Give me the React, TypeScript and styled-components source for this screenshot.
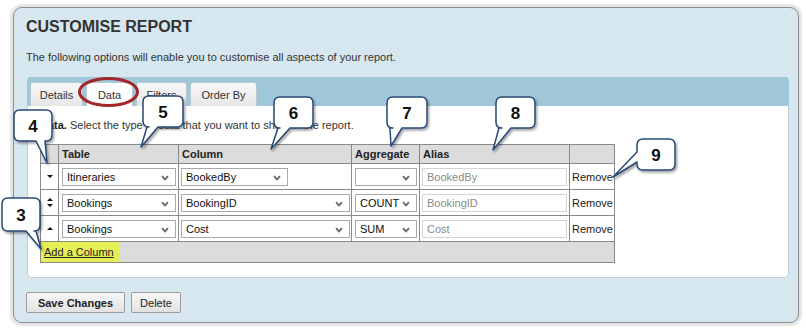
import React from "react";
import styled, { createGlobalStyle } from "styled-components";

const GlobalStyle = createGlobalStyle`
  html, body { margin: 0; padding: 0; background: #ffffff; }
  body { font-family: "Liberation Sans", Arial, sans-serif; font-size: 11px; color: #333; }
  * { box-sizing: border-box; }
`;

const Page = styled.div`
  position: relative;
  width: 806px;
  height: 329px;
  padding: 7px 0 0 13px;
  overflow: hidden;
`;

const Panel = styled.section`
  width: 786px;
  border: 1px solid #8e8e8e;
  border-radius: 9px;
  background: #d6e7ef;
  box-shadow: 0 0 2px 3px #e4e4e4;
  padding: 10px 8px 9px 12px;
`;

const Title = styled.h1`
  margin: 0;
  font-size: 16px;
  line-height: 18px;
  font-weight: bold;
  color: #333;
`;

const Intro = styled.p`
  margin: 15px 0 0;
  line-height: 13px;
`;

const Tabs = styled.div`
  margin: 13px 0 0 1px;
  width: 762px;
`;

const TabBar = styled.div`
  display: flex;
  align-items: flex-end;
  gap: 3px;
  height: 29px;
  padding-left: 3px;
  background: #9fc6d9;
  border-radius: 4px 4px 0 0;
`;

const Tab = styled.div<{ $w: number; $active?: boolean }>`
  width: ${(p) => p.$w}px;
  height: 24px;
  line-height: 24px;
  text-align: center;
  border: 1px solid #b7c9d2;
  border-bottom: none;
  border-radius: 3px 3px 0 0;
  background: ${(p) => (p.$active ? "#ffffff" : "linear-gradient(#f8f8f8, #e6e6e6)")};
  color: #333;
`;

const TabBody = styled.div`
  height: 172px;
  background: #ffffff;
  border: 1px solid #c3cdd2;
  border-top: none;
  border-radius: 0 0 5px 5px;
  padding: 13px 12px 14px;
`;

const Instruction = styled.p`
  margin: 0;
  line-height: 13px;
  color: #333;
  b { color: #222; }
`;

const Grid = styled.table`
  margin-top: 12px;
  width: 575px;
  border-collapse: separate;
  border-spacing: 0;
  table-layout: fixed;
  border-left: 1px solid #8a8a8a;
  border-top: 1px solid #8a8a8a;
`;

const Th = styled.th`
  height: 19px;
  padding: 0 2px 0 3px;
  background: #dcdcdc;
  border-right: 1px solid #8a8a8a;
  border-bottom: 1px solid #8a8a8a;
  text-align: left;
  font-size: 11px;
  font-weight: bold;
  color: #222;
  vertical-align: middle;
`;

const Td = styled.td<{ $pl?: number }>`
  height: 26px;
  padding: 0 0 0 ${(p) => p.$pl ?? 3}px;
  border-right: 1px solid #8a8a8a;
  border-bottom: 1px solid #8a8a8a;
  vertical-align: middle;
  color: #222;
  white-space: nowrap;
  overflow: hidden;
`;

const MoveCell = styled.td`
  height: 26px;
  padding: 0;
  border-right: 1px solid #8a8a8a;
  border-bottom: 1px solid #8a8a8a;
  vertical-align: middle;
`;

const ArrowStack = styled.div`
  display: flex;
  flex-direction: column;
  align-items: center;
  gap: 3px;
`;

const Triangle = styled.span<{ $dir: "up" | "down" }>`
  display: block;
  width: 0;
  height: 0;
  border-left: 3px solid transparent;
  border-right: 3px solid transparent;
  ${(p) =>
    p.$dir === "up"
      ? "border-bottom: 3px solid #111;"
      : "border-top: 3px solid #111;"}
`;

const SelectBox = styled.div<{ $w: number }>`
  display: flex;
  align-items: center;
  justify-content: space-between;
  width: ${(p) => p.$w}px;
  height: 18px;
  padding: 0 6px 0 4px;
  border: 1px solid #a8a8a8;
  background: #ffffff;
  color: #111;
  font-size: 11px;
`;

const Chevron = styled.svg`
  flex: none;
  margin-top: 2px;
`;

const AliasInput = styled.input`
  display: block;
  width: 145px;
  height: 18px;
  padding: 0 4px;
  border: 1px solid #d4d4d4;
  font-family: inherit;
  font-size: 11px;
  color: #777;
  background: #fff;
  &::placeholder { color: #8a8a8a; opacity: 1; }
`;

const FootCell = styled.td`
  height: 21px;
  padding: 0;
  background: #dcdcdc;
  border-right: 1px solid #8a8a8a;
  border-bottom: 1px solid #8a8a8a;
  vertical-align: middle;
`;

const AddLink = styled.a`
  display: inline-block;
  height: 20px;
  line-height: 20px;
  padding: 0 6px 0 3px;
  background: #e6ee55;
  color: #222;
  text-decoration: underline;
`;

const ButtonRow = styled.div`
  display: flex;
  gap: 6px;
  margin-top: 14px;
`;

const Button = styled.button<{ $w: number; $bold?: boolean }>`
  width: ${(p) => p.$w}px;
  height: 21px;
  padding: 0;
  border: 1px solid #9c9c9c;
  border-radius: 2px;
  background: linear-gradient(#f6f6f6, #e2e2e2);
  font-family: inherit;
  font-size: 11px;
  font-weight: ${(p) => (p.$bold ? "bold" : "normal")};
  color: #222;
`;

const Overlay = styled.svg`
  position: absolute;
  left: 0;
  top: 0;
  pointer-events: none;
`;

const Select = ({ w, value }: { w: number; value: string }) => (
  <SelectBox $w={w}>
    <span>{value}</span>
    <Chevron width="8" height="6" viewBox="0 0 8 6">
      <path d="M1 1.2 L4 4.4 L7 1.2" fill="none" stroke="#666" strokeWidth="1.7" />
    </Chevron>
  </SelectBox>
);

type Row = {
  up: boolean;
  down: boolean;
  table: string;
  column: string;
  columnW: number;
  agg: string;
  alias: string;
};

const rows: Row[] = [
  { up: false, down: true, table: "Itineraries", column: "BookedBy", columnW: 107, agg: "", alias: "BookedBy" },
  { up: true, down: true, table: "Bookings", column: "BookingID", columnW: 169, agg: "COUNT", alias: "BookingID" },
  { up: true, down: false, table: "Bookings", column: "Cost", columnW: 169, agg: "SUM", alias: "Cost" },
];

type Tail =
  | { side: "bottom"; a: number; b: number; tx: number; ty: number }
  | { side: "left"; a: number; b: number; tx: number; ty: number };

type CalloutDef = { n: string; x: number; y: number; w: number; h: number; tail: Tail };

const callouts: CalloutDef[] = [
  { n: "4", x: 14, y: 110, w: 38, h: 31, tail: { side: "bottom", a: 36, b: 45, tx: 47, ty: 163 } },
  { n: "5", x: 143, y: 96, w: 40, h: 31, tail: { side: "bottom", a: 147, b: 158, tx: 141, ty: 147 } },
  { n: "6", x: 274, y: 97, w: 39, h: 31, tail: { side: "bottom", a: 278, b: 290, tx: 271, ty: 149 } },
  { n: "7", x: 387, y: 97, w: 40, h: 31, tail: { side: "bottom", a: 390, b: 402, tx: 391, ty: 146 } },
  { n: "8", x: 496, y: 97, w: 39, h: 31, tail: { side: "bottom", a: 499, b: 511, tx: 493, ty: 150 } },
  { n: "9", x: 637, y: 139, w: 38, h: 31, tail: { side: "left", a: 152, b: 162, tx: 613, ty: 177 } },
  { n: "3", x: 2, y: 198, w: 38, h: 33, tail: { side: "bottom", a: 26, b: 36, tx: 41, ty: 249 } },
];

const calloutPath = ({ x, y, w, h, tail }: CalloutDef) => {
  const r = 6;
  const top = `M${x + r},${y} H${x + w - r} Q${x + w},${y} ${x + w},${y + r}`;
  if (tail.side === "bottom") {
    return (
      `${top} V${y + h - r} Q${x + w},${y + h} ${x + w - r},${y + h} ` +
      `H${tail.b} L${tail.tx},${tail.ty} L${tail.a},${y + h} ` +
      `H${x + r} Q${x},${y + h} ${x},${y + h - r} V${y + r} Q${x},${y} ${x + r},${y} Z`
    );
  }
  return (
    `${top} V${y + h - r} Q${x + w},${y + h} ${x + w - r},${y + h} ` +
    `H${x + r} Q${x},${y + h} ${x},${y + h - r} V${tail.b} L${tail.tx},${tail.ty} L${x},${tail.a} ` +
    `V${y + r} Q${x},${y} ${x + r},${y} Z`
  );
};

const Annotations = () => (
  <Overlay width="806" height="329" viewBox="0 0 806 329">
    <defs>
      <filter id="cs" x="-20%" y="-20%" width="150%" height="150%">
        <feDropShadow dx="1.5" dy="2" stdDeviation="1.3" floodColor="#000" floodOpacity="0.35" />
      </filter>
    </defs>
    <ellipse cx="108.5" cy="92" rx="29" ry="13.5" fill="none" stroke="#a3262b" strokeWidth="3" />
    {callouts.map((c) => (
      <g key={c.n}>
        <path d={calloutPath(c)} fill="#ffffff" stroke="#284a74" strokeWidth="1.5" strokeLinejoin="round" filter="url(#cs)" />
        <text
          x={c.x + c.w / 2}
          y={c.y + c.h / 2 + 6}
          textAnchor="middle"
          fontFamily='"Liberation Sans", Arial, sans-serif'
          fontWeight="bold"
          fontSize="17"
          fill="#111"
        >
          {c.n}
        </text>
      </g>
    ))}
  </Overlay>
);

export default function App() {
  return (
    <Page>
      <GlobalStyle />
      <Panel>
        <Title>CUSTOMISE REPORT</Title>
        <Intro>The following options will enable you to customise all aspects of your report.</Intro>
        <Tabs>
          <TabBar>
            <Tab $w={53}>Details</Tab>
            <Tab $w={47} $active>Data</Tab>
            <Tab $w={51}>Filters</Tab>
            <Tab $w={67}>Order By</Tab>
          </TabBar>
          <TabBody>
            <Instruction>
              <b>Data.</b> Select the type of data that you want to show in the report.
            </Instruction>
            <Grid>
              <colgroup>
                <col style={{ width: 18 }} />
                <col style={{ width: 120 }} />
                <col style={{ width: 173 }} />
                <col style={{ width: 68 }} />
                <col style={{ width: 150 }} />
                <col style={{ width: 45 }} />
              </colgroup>
              <thead>
                <tr>
                  <Th />
                  <Th>Table</Th>
                  <Th>Column</Th>
                  <Th>Aggregate</Th>
                  <Th>Alias</Th>
                  <Th />
                </tr>
              </thead>
              <tbody>
                {rows.map((r, i) => (
                  <tr key={i}>
                    <MoveCell>
                      <ArrowStack>
                        {r.up && <Triangle $dir="up" />}
                        {r.down && <Triangle $dir="down" />}
                      </ArrowStack>
                    </MoveCell>
                    <Td><Select w={114} value={r.table} /></Td>
                    <Td $pl={2}><Select w={r.columnW} value={r.column} /></Td>
                    <Td><Select w={62} value={r.agg} /></Td>
                    <Td $pl={2}><AliasInput placeholder={r.alias} readOnly /></Td>
                    <Td $pl={2}>Remove</Td>
                  </tr>
                ))}
                <tr>
                  <FootCell colSpan={6}>
                    <AddLink href="#">Add a Column</AddLink>
                  </FootCell>
                </tr>
              </tbody>
            </Grid>
          </TabBody>
        </Tabs>
        <ButtonRow>
          <Button $w={99} $bold>Save Changes</Button>
          <Button $w={50}>Delete</Button>
        </ButtonRow>
      </Panel>
      <Annotations />
    </Page>
  );
}
